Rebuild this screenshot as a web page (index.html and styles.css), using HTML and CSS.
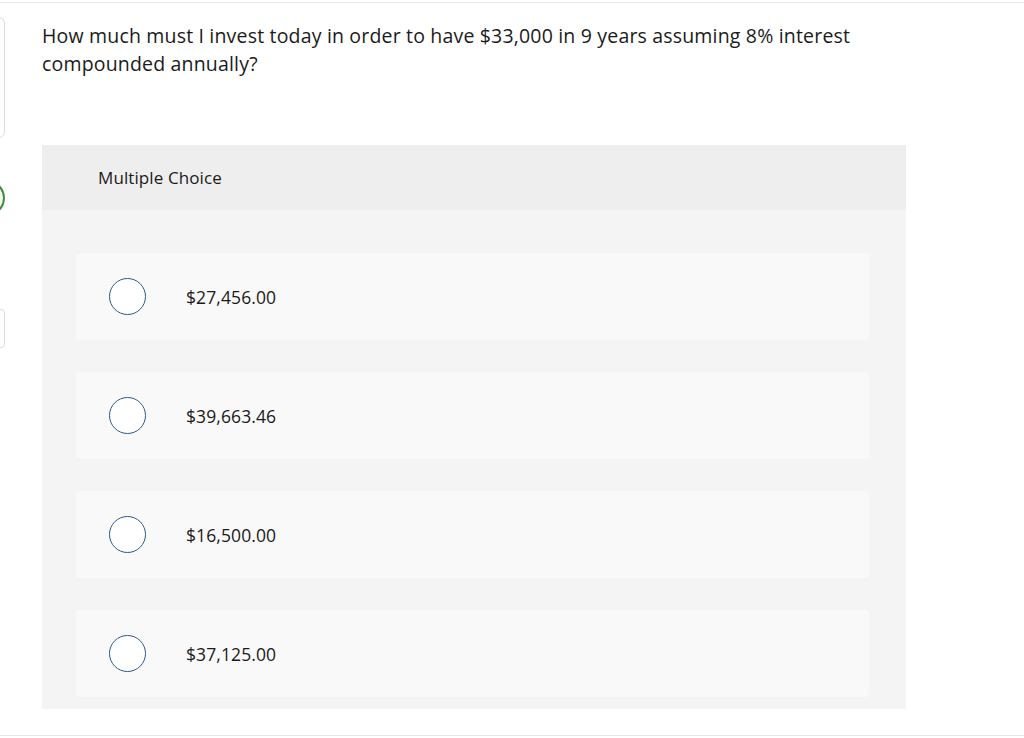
FILE: index.html
```html
<!DOCTYPE html>
<html lang="en">
<head>
<meta charset="utf-8">
<title>Multiple Choice</title>
<link rel="stylesheet" href="styles.css">
</head>
<body>
<div class="page">
  <aside class="rail">
    <div class="rail-card"></div>
    <div class="rail-pill"></div>
    <div class="rail-box"></div>
  </aside>
  <main class="content">
    <p class="question">How much must I invest today in order to have $33,000 in 9 years assuming 8% interest compounded annually?</p>
    <section class="panel">
      <header class="panel-head">Multiple Choice</header>
      <div class="options">
        <label class="option"><span class="radio"></span><span class="answer">$27,456.00</span></label>
        <label class="option"><span class="radio"></span><span class="answer">$39,663.46</span></label>
        <label class="option"><span class="radio"></span><span class="answer">$16,500.00</span></label>
        <label class="option"><span class="radio"></span><span class="answer">$37,125.00</span></label>
      </div>
    </section>
  </main>
</div>
</body>
</html>
```

FILE: styles.css
```css
* { box-sizing: border-box; }
html, body { margin: 0; padding: 0; background: #fff; }
body {
  font-family: "Open Sans", "Liberation Sans", sans-serif;
  color: #1b1b1b;
  padding-top: 2px;
}
.page {
  display: flex;
  height: 734px;
  border-top: 1px solid #e6e6e6;
  border-bottom: 1px solid #e6e6e6;
}
.rail {
  width: 5px;
  overflow: hidden;
  flex: none;
}
.rail-card {
  width: 40px;
  height: 121px;
  margin: 14px 0 0 -35px;
  border: 1px solid #dcdcdc;
  border-radius: 6px;
}
.rail-pill {
  width: 40px;
  height: 36px;
  margin: 42px 0 0 -35px;
  border: 2px solid #3f8f3f;
  border-radius: 18px;
  background: #f5faf3;
}
.rail-box {
  width: 40px;
  height: 39px;
  margin: 93px 0 0 -35px;
  border: 1px solid #dcdcdc;
  border-radius: 4px;
}
.content {
  padding-left: 37px;
  width: 906px;
}
.question {
  margin: 19px 0 0;
  font-size: 19.5px;
  letter-spacing: 0.18px;
  line-height: 28px;
  max-width: 830px;
}
.panel {
  margin-top: 67px;
  width: 864px;
  background: #f4f4f4;
}
.panel-head {
  height: 65px;
  background: #eeeeee;
  padding-left: 56px;
  display: flex;
  align-items: center;
  font-size: 17px;
  letter-spacing: 0.1px;
}
.options {
  display: flex;
  flex-direction: column;
  gap: 32px;
  padding: 43px 37px 12px 34px;
}
.option {
  height: 87px;
  background: #f9f9f9;
  border-radius: 4px;
  display: flex;
  align-items: center;
  padding-left: 33px;
}
.radio {
  width: 37px;
  height: 37px;
  border: 1.5px solid #2b5a8c;
  border-radius: 50%;
  background: #fff;
  flex: none;
}
.answer {
  margin-left: 40px;
  font-size: 17.5px;
  letter-spacing: 0.1px;
}
```
